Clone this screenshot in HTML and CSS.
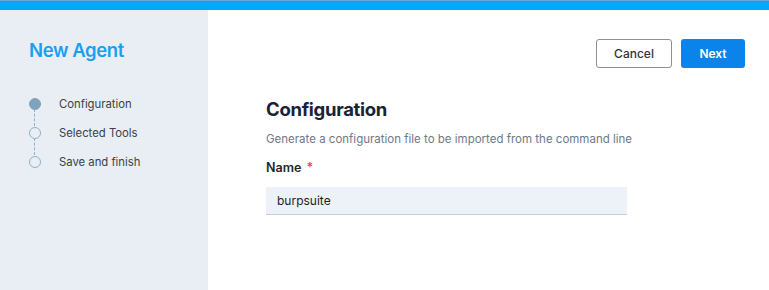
FILE: index.html
```html
<!DOCTYPE html>
<html lang="en">
<head>
    <meta charset="UTF-8">
    <meta name="viewport" content="width=device-width, initial-scale=1.0">
    <title>New Agent</title>
    <link rel="stylesheet" href="styles.css">
</head>
<body>
    <div class="top-bar"></div>
    <div class="layout">
        <aside class="sidebar">
            <h1>New Agent</h1>
            <ul class="steps">
                <li class="step active"><span class="marker"></span>Configuration</li>
                <li class="step"><span class="marker"></span>Selected Tools</li>
                <li class="step"><span class="marker"></span>Save and finish</li>
            </ul>
        </aside>
        <main class="main">
            <div class="actions">
                <button class="btn btn-cancel">Cancel</button>
                <button class="btn btn-next">Next</button>
            </div>
            <section class="form">
                <h2>Configuration</h2>
                <p class="hint">Generate a configuration file to be imported from the command line</p>
                <label class="field-label" for="agent-name">Name <span class="required">*</span></label>
                <input type="text" id="agent-name" class="field-input" value="burpsuite">
            </section>
        </main>
    </div>
</body>
</html>
```

FILE: styles.css
```css
html, body {
    margin: 0;
    padding: 0;
    height: 100%;
    font-family: Inter, "Noto Sans", Arial, sans-serif;
    background-color: white;
}
.top-bar {
    height: 9px;
    background-color: #07a6fb;
    border-top: 1px solid #6aa6d4;
}
.layout {
    display: flex;
    height: calc(100% - 10px);
}
.sidebar {
    width: 208px;
    flex-shrink: 0;
    background-color: #e9eef5;
    padding: 28px 0 0 29px;
    box-sizing: border-box;
}
.sidebar h1 {
    margin: 0;
    font-size: 18.5px;
    line-height: 24px;
    font-weight: 600;
    color: #1a9ff0;
    letter-spacing: -0.4px;
}
.steps {
    list-style: none;
    margin: 27px 0 0 0;
    padding: 0;
}
.step {
    position: relative;
    display: flex;
    align-items: center;
    height: 29px;
    font-size: 11.3px;
    color: #3b4048;
}
.marker {
    width: 12px;
    height: 12px;
    border: 1.5px solid #8fb0c7;
    border-radius: 50%;
    box-sizing: border-box;
    margin-right: 18px;
    background-color: #e9eef5;
}
.step.active .marker {
    background-color: #7fa3bd;
    border-color: #7fa3bd;
}
.step + .step::before {
    content: "";
    position: absolute;
    left: 5px;
    top: -9px;
    height: 17px;
    border-left: 1.5px dashed #8fb0c7;
}
.main {
    flex-grow: 1;
    padding: 29px 24px 0 58px;
}
.actions {
    display: flex;
    justify-content: flex-end;
    gap: 9px;
}
.btn {
    height: 29px;
    font-family: inherit;
    font-size: 12px;
    font-weight: 500;
    border-radius: 3px;
    cursor: pointer;
}
.btn-cancel {
    width: 76px;
    background-color: white;
    border: 1px solid #8d9299;
    color: #2f3440;
}
.btn-next {
    width: 64px;
    background-color: #0a84ea;
    border: none;
    color: white;
    font-weight: 600;
}
.form {
    display: flex;
    flex-direction: column;
    align-items: flex-start;
}
.form h2 {
    margin: 29px 0 0 0;
    font-size: 18.5px;
    line-height: 24px;
    font-weight: 700;
    color: #1b2136;
    letter-spacing: -0.3px;
}
.hint {
    margin: 10px 0 0 0;
    font-size: 11.5px;
    line-height: 16px;
    color: #6e7a88;
}
.field-label {
    margin-top: 13px;
    font-size: 12.5px;
    line-height: 16px;
    font-weight: 600;
    color: #1f2430;
}
.required {
    color: #e8484f;
    margin-left: 2px;
}
.field-input {
    margin-top: 11px;
    width: 361px;
    height: 28px;
    box-sizing: border-box;
    border: none;
    border-bottom: 1px solid #c9ced6;
    background-color: #edf2f8;
    padding: 0 11px;
    font-family: inherit;
    font-size: 12px;
    color: #1b1f26;
    outline: none;
}
```
